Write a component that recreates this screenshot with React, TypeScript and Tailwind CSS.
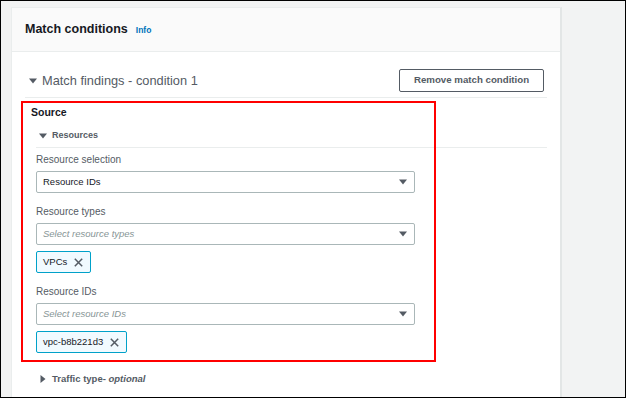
import React from "react";

const Down = ({ className = "" }: { className?: string }) => (
  <svg width="8" height="6" viewBox="0 0 8 6" className={className}>
    <path d="M0 0.5 L8 0.5 L4 5.5 Z" fill="#545b64" />
  </svg>
);
const Right = ({ className = "" }: { className?: string }) => (
  <svg width="6" height="8" viewBox="0 0 6 8" className={className}>
    <path d="M0.5 0 L5.5 4 L0.5 8 Z" fill="#545b64" />
  </svg>
);
const X = () => (
  <svg width="9" height="9" viewBox="0 0 9 9" className="ml-[7px]">
    <path d="M0.8 0.8 L8.2 8.2 M8.2 0.8 L0.8 8.2" stroke="#545b64" strokeWidth="1.5" fill="none" />
  </svg>
);

const Select = ({ value, placeholder }: { value?: string; placeholder?: string }) => (
  <div className="mt-[4px] h-[22px] w-[379px] border border-[#aab7b8] rounded-[2px] flex items-center justify-between pl-[6px] pr-[7px] bg-white">
    {value ? (
      <span className="text-[9.5px] text-[#16191f]">{value}</span>
    ) : (
      <span className="text-[9.5px] italic text-[#879596]">{placeholder}</span>
    )}
    <Down />
  </div>
);

const Token = ({ label }: { label: string }) => (
  <div className="mt-[6px] h-[22px] inline-flex items-center self-start border border-[#00a1c9] bg-[#f1faff] rounded-[2px] pl-[6px] pr-[7px]">
    <span className="text-[9.5px] text-[#16191f]">{label}</span>
    <X />
  </div>
);

const Label = ({ children, className = "" }: { children: React.ReactNode; className?: string }) => (
  <div className={`text-[10px] leading-[14px] text-[#545b64] ${className}`}>{children}</div>
);

export default function App() {
  return (
    <div
      className="relative w-[626px] h-[398px] border border-black bg-[#f2f3f3] overflow-hidden pl-[10px] pt-[6px]"
      style={{ fontFamily: '"Liberation Sans", Arial, sans-serif' }}
    >
      <div className="w-[551px] h-[420px] bg-white border-l border-t border-[#eaeded] border-r-2 border-r-[#e3e6e6]">
        <div className="h-[44px] bg-[#fafafa] border-b border-[#eaeded] flex items-center pl-[13px]">
          <span className="text-[12.5px] font-bold text-[#16191f]">Match conditions</span>
          <span className="ml-[8px] text-[8.5px] font-bold text-[#0073bb] mt-[2px]">Info</span>
        </div>
        <div className="px-[13px] pt-[17px]">
          <div className="flex items-center justify-between border-b border-[#eaeded] pb-[5px] pr-[3px]">
            <div className="flex items-center pl-[4px]">
              <Down />
              <span className="ml-[5px] text-[12.8px] text-[#545b64]">Match findings - condition 1</span>
            </div>
            <div className="h-[23px] w-[145px] border border-[#545b64] rounded-[2px] flex items-center justify-center text-[9.7px] font-bold text-[#545b64]">
              Remove match condition
            </div>
          </div>
          <div className="pl-[6px]">
            <div className="mt-[7px] text-[10.5px] leading-[14px] font-bold text-[#16191f]">Source</div>
            <div className="pl-[5px]">
              <div className="mt-[10px] flex items-center pl-[3px] h-[14px]">
                <Down />
                <span className="ml-[5px] text-[9px] font-bold text-[#545b64]">Resources</span>
              </div>
              <div className="mt-[4px] border-t border-[#eaeded] flex flex-col">
                <Label className="mt-[5px]">Resource selection</Label>
                <Select value="Resource IDs" />
                <Label className="mt-[12px]">Resource types</Label>
                <Select placeholder="Select resource types" />
                <Token label="VPCs" />
                <Label className="mt-[12px]">Resource IDs</Label>
                <Select placeholder="Select resource IDs" />
                <Token label="vpc-b8b221d3" />
              </div>
              <div className="mt-[19px] flex items-center pl-[4px] h-[14px]">
                <Right />
                <span className="ml-[6px] text-[9.5px] font-bold text-[#545b64]">
                  Traffic type- <span className="italic">optional</span>
                </span>
              </div>
            </div>
          </div>
        </div>
      </div>
      <div className="absolute left-[20px] top-[100px] w-[415px] h-[261px] border-2 border-[#ff0000] pointer-events-none" />
    </div>
  );
}
